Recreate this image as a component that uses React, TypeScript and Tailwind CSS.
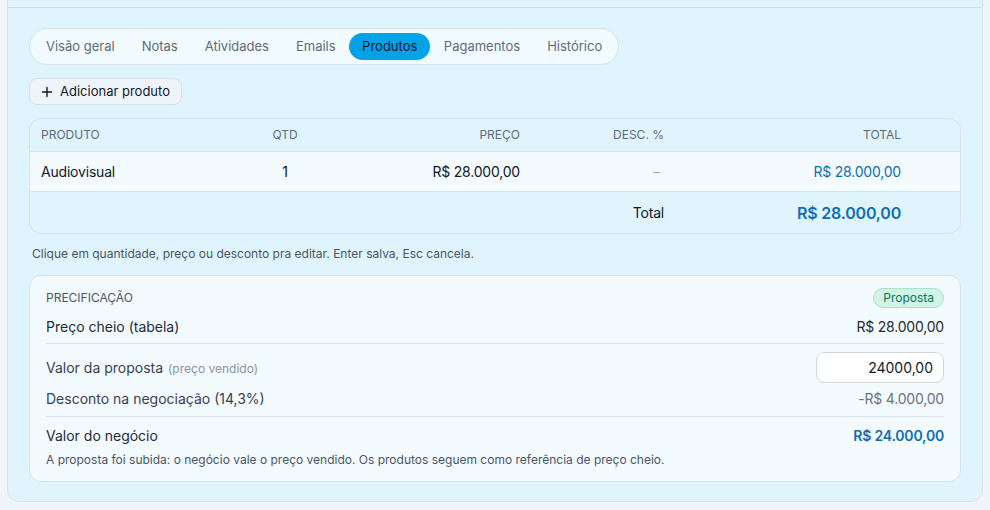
import React from "react";

const tabs = ["Visão geral", "Notas", "Atividades", "Emails", "Produtos", "Pagamentos", "Histórico"];
const cols = "grid grid-cols-[220px_70px_200px_144px_237px_1fr]";

export default function App() {
  return (
    <div className="w-[990px] h-[510px] bg-[#f1f5f9] overflow-hidden" style={{ fontFamily: "Inter, 'Noto Sans', sans-serif" }}>
      <div className="mx-[7px] -mt-[20px] h-[522px] rounded-b-xl border border-[#d9e3ea] bg-[#e0f4fd]">
        <div className="h-[27px] border-b border-[#cfdde6]" />
        <div className="px-[21px] pt-[20px]">
          {/* Tabs */}
          <div className="inline-flex items-center h-[37px] rounded-full border border-[#d5e3ec] bg-[#f2fbff] px-[2.5px] text-[13px]">
            {tabs.map((t) => (
              <div
                key={t}
                className={
                  t === "Produtos"
                    ? "h-[27px] px-[13px] flex items-center rounded-full bg-[#05a3e6] text-[#0f172a]"
                    : "h-[27px] px-[13.5px] flex items-center text-[#5f6b7a]"
                }
              >
                {t}
              </div>
            ))}
          </div>

          {/* Add button */}
          <div className="mt-[13px]">
            <button className="h-[27px] px-[11px] flex items-center gap-[7px] rounded-lg border border-[#d5e0e8] bg-[#eef5fa] text-[13px] text-[#111827]">
              <svg width="12" height="12" viewBox="0 0 12 12" fill="none" stroke="#111827" strokeWidth="1.4" strokeLinecap="round">
                <path d="M6 1.5v9M1.5 6h9" />
              </svg>
              Adicionar produto
            </button>
          </div>

          {/* Table */}
          <div className="mt-[13px] rounded-xl border border-[#d5e3ec] overflow-hidden">
            <div className={`${cols} h-[33px] items-center text-[12px] text-[#5f6b7a] uppercase border-b border-[#d5e3ec]`}>
              <div className="pl-[11px]">Produto</div>
              <div className="text-center">QTD</div>
              <div className="text-right">Preço</div>
              <div className="text-right">Desc. %</div>
              <div className="text-right">Total</div>
              <div />
            </div>
            <div className={`${cols} h-[40px] items-center text-[14px] bg-[#f3fbff] border-b border-[#d5e3ec] tracking-[-0.2px]`}>
              <div className="pl-[11px] text-[#111827]">Audiovisual</div>
              <div className="text-center text-[#111827]">1</div>
              <div className="text-right text-[#111827]">R$ 28.000,00</div>
              <div className="text-right text-[#a3acb8] pr-[4px]">–</div>
              <div className="text-right text-[#0b6fb5]">R$ 28.000,00</div>
              <div />
            </div>
            <div className={`${cols} h-[41px] items-center tracking-[-0.2px]`}>
              <div />
              <div />
              <div />
              <div className="text-right text-[14px] text-[#111827]">Total</div>
              <div className="text-right text-[16px] font-semibold text-[#0b6fb5]">R$ 28.000,00</div>
              <div />
            </div>
          </div>

          <div className="mt-[11px] pl-[3px] text-[12px] text-[#4b5563]">
            Clique em quantidade, preço ou desconto pra editar. Enter salva, Esc cancela.
          </div>

          {/* Pricing card */}
          <div className="mt-[12px] rounded-xl border border-[#d5e3ec] bg-[#f3fbff] px-[16px] pt-[12px] pb-[12px]">
            <div className="flex items-center justify-between h-[20px]">
              <div className="text-[12px] text-[#4b5563] uppercase">Precificação</div>
              <div className="h-[20px] px-[9px] flex items-center rounded-full border border-[#a7e3cb] bg-[#d2f4e6] text-[12px] text-[#047857]">
                Proposta
              </div>
            </div>
            <div className="flex items-center justify-between h-[28px] text-[14px] border-b border-[#d9e4eb] pb-[3px] mt-[4px] box-content">
              <div className="text-[#1f2937]">Preço cheio (tabela)</div>
              <div className="text-[#1f2937] tracking-[-0.2px]">R$ 28.000,00</div>
            </div>
            <div className="flex items-center justify-between mt-[8px] h-[31px] text-[14px]">
              <div className="text-[#374151]">
                Valor da proposta <span className="text-[12px] text-[#8a94a3] ml-[1px]">(preço vendido)</span>
              </div>
              <input
                readOnly
                value="24000,00"
                className="w-[128px] h-[31px] rounded-lg border border-[#cfd9e2] bg-white text-right pr-[10px] text-[14px] text-[#111827] outline-none"
              />
            </div>
            <div className="flex items-center justify-between h-[30px] text-[14px] border-b border-[#d9e4eb] pb-[3px] box-content">
              <div className="text-[#374151]">Desconto na negociação (14,3%)</div>
              <div className="text-[#6b7280] tracking-[-0.2px]">-R$ 4.000,00</div>
            </div>
            <div className="flex items-center justify-between h-[30px] mt-[3px] text-[14px]">
              <div className="text-[#1f2937]">Valor do negócio</div>
              <div className="text-[#0b6fb5] font-semibold tracking-[-0.2px]">R$ 24.000,00</div>
            </div>
            <div className="text-[12px] text-[#4b5563] mt-[1px]">
              A proposta foi subida: o negócio vale o preço vendido. Os produtos seguem como referência de preço cheio.
            </div>
          </div>
        </div>
      </div>
    </div>
  );
}
